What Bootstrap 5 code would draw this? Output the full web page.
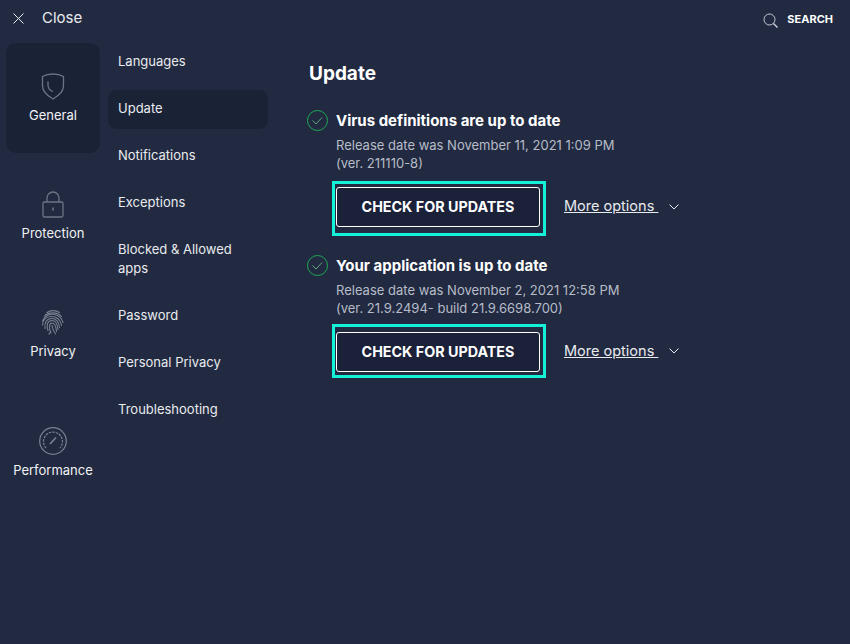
<!DOCTYPE html>
<html lang="en">
<head>
<meta charset="utf-8">
<title>Update</title>
<link href="https://cdn.jsdelivr.net/npm/bootstrap@5.3.0/dist/css/bootstrap.min.css" rel="stylesheet">
<style>
html,body{height:100%;}
body{background:#212a41;color:#fff;font-family:Inter,"Liberation Sans",sans-serif;font-size:13px;overflow:hidden;}
.topbar{height:37px;padding:0 17px 0 13px;}
.close-txt{font-size:15px;color:#e9ebef;margin-left:18px;line-height:20px;padding-bottom:2px;}
.search-txt{font-size:11px;font-weight:700;margin-left:9px;padding-top:2px;}
.search-ico{margin-top:3px;}
.rail{width:94px;margin:6px 0 0 6px;gap:8px;}
.tile{height:110px;border-radius:10px;padding-top:30px;color:#f1f2f5;}
.tile svg{display:block;margin-bottom:6px;}
.tile.on{background:#1a2236;}
.subnav{width:160px;margin:6px 0 0 8px;gap:8px;}
.subitem{padding:9px 10px 11px;line-height:19px;border-radius:9px;color:#e9ebef;}
.subitem.on{background:#1a2236;}
.pane{padding:25px 0 0 41px;}
.pane-title{font-size:19px;font-weight:700;line-height:24px;margin-bottom:24px;}
.st-title{font-size:15px;font-weight:700;line-height:20px;padding-top:1px;}
.st-desc{color:#b7bcc7;line-height:18px;margin:5px 0 0 29px;}
.act{margin:9px 0 0 25px;}
.act.second{margin-top:7px;}
.hl{border:3px solid #14f1d9;padding:3px 3px 6px 1px;}
.second .hl{padding:5px 3px 3px 1px;}
.chk{width:204px;height:40px;background:#1b2138;border:1px solid #fff;border-radius:3px;color:#fff;font-size:14.3px;font-weight:700;padding:0;}
.chk:hover{background:#1b2138;color:#fff;border-color:#fff;}
.more{color:#e9ebef;font-size:14.5px;text-decoration:underline;margin-left:18px;padding-bottom:6px;white-space:pre;}
.second .more{padding-bottom:0;}
.more:hover{color:#e9ebef;}
.chev{margin:0 0 4px 11px;}
.second .chev{margin-bottom:0;}
.group{margin-bottom:19px;}
.status{margin-left:-2px;}
</style>
</head>
<body>
<div class="d-flex flex-column h-100">
  <div class="topbar d-flex align-items-center justify-content-between">
    <div class="d-flex align-items-center">
      <svg width="11" height="11" viewBox="0 0 11 11"><path d="M.5.500l10 10M10.500.500l-10 10" stroke="#e9ebef" stroke-width="1" fill="none"/></svg>
      <span class="close-txt">Close</span>
    </div>
    <div class="d-flex align-items-center">
      <svg class="search-ico" width="15" height="15" viewBox="0 0 15 15" fill="none" stroke="#c9ccd4"><circle cx="6.500" cy="6.500" r="5.500"/><path d="M10.500 10.500l4 4" stroke-width="1.500"/></svg>
      <span class="search-txt">SEARCH</span>
    </div>
  </div>
  <div class="d-flex flex-grow-1">
    <div class="rail d-flex flex-column flex-shrink-0">
      <div class="tile on d-flex flex-column align-items-center">
        <svg width="24" height="27" viewBox="0 0 24 27" fill="none" stroke="#6d7485" stroke-width="1.300"><path d="M1.500 3.500C5 1.500 8 1 12 1s7 .5 10.500 2.500V13c0 5.500-4.500 9.500-10.500 13C6 22.500 1.500 18.500 1.500 13z"/><path d="M7 8.500v3.500c0 3.500 2 5.500 5 6.500"/></svg>
        <span>General</span>
      </div>
      <div class="tile d-flex flex-column align-items-center">
        <svg width="22" height="27" viewBox="0 0 22 27" fill="none" stroke="#6d7485" stroke-width="1.300"><rect x="1" y="11" width="20" height="15" rx="1.500"/><path d="M5 11V7a6 6 0 0 1 12 0v4"/><path d="M11 16.500v3" stroke-width="1.600"/></svg>
        <span>Protection</span>
      </div>
      <div class="tile d-flex flex-column align-items-center">
        <svg width="24" height="27" viewBox="0 0 24 27" fill="none" stroke="#7b8292" stroke-width="1.100" stroke-linecap="round"><path d="M6 3.500C9.500 1 15 1 18.500 3.500"/><path d="M3.500 7C7 3 16.500 2.500 20.500 7.500"/><path d="M1.500 12C3.500 6.500 9 4.500 13.500 5.500s7.500 4.500 8.500 8"/><path d="M1.500 16c0-5 3.500-8.500 8.500-8.500 6 0 9.500 3.500 10.500 9"/><path d="M4 19.500c-1-6 2-10 6.500-10 4.500 0 7.500 3.500 8 9"/><path d="M7 21.500C5 16 6.500 11.500 11 11.500c3.500 0 5.500 3 6 9"/><path d="M9.500 23c-1.500-3-1.500-9 1.500-9s4 3 4.500 8.500"/><path d="M11 16.500c.5 3.500 1.500 6 3.500 8.500"/><path d="M8 25l2-2"/></svg>
        <span>Privacy</span>
      </div>
      <div class="tile d-flex flex-column align-items-center">
        <svg width="28" height="28" viewBox="0 0 28 28" fill="none" stroke="#7b8292" stroke-width="1.200"><circle cx="14" cy="14" r="13.300"/><path d="M7 21a9.500 9.500 0 1 1 14 0" stroke-dasharray="2.500 1"/><path d="M11 17l6-6.500" stroke-width="1.600"/></svg>
        <span>Performance</span>
      </div>
    </div>
    <div class="subnav d-flex flex-column flex-shrink-0">
      <div class="subitem">Languages</div>
      <div class="subitem on">Update</div>
      <div class="subitem">Notifications</div>
      <div class="subitem">Exceptions</div>
      <div class="subitem">Blocked &amp; Allowed apps</div>
      <div class="subitem">Password</div>
      <div class="subitem">Personal Privacy</div>
      <div class="subitem">Troubleshooting</div>
    </div>
    <div class="pane flex-grow-1">
      <div class="pane-title">Update</div>
      <div class="group status">
        <div class="d-flex align-items-center gap-2">
          <svg width="21" height="21" viewBox="0 0 21 21" fill="none"><circle cx="10.500" cy="10.500" r="10" stroke="#1faa55"/><path d="M5.500 10.500l3.500 3.500 6-6.500" stroke="#5fa67f"/></svg>
          <span class="st-title">Virus definitions are up to date</span>
        </div>
        <div class="st-desc">Release date was November 11, 2021 1:09 PM<br>(ver. 211110-8)</div>
        <div class="act d-flex align-items-center">
          <div class="hl"><button type="button" class="btn chk">CHECK FOR UPDATES</button></div>
          <a href="#" class="more">More options </a>
          <svg class="chev" width="10" height="6" viewBox="0 0 10 6" fill="none"><path d="M.5.500l4.500 4.500 4.500-4.500" stroke="#e9ebef"/></svg>
        </div>
      </div>
      <div class="group status">
        <div class="d-flex align-items-center gap-2">
          <svg width="21" height="21" viewBox="0 0 21 21" fill="none"><circle cx="10.500" cy="10.500" r="10" stroke="#1faa55"/><path d="M5.500 10.500l3.500 3.500 6-6.500" stroke="#5fa67f"/></svg>
          <span class="st-title">Your application is up to date</span>
        </div>
        <div class="st-desc">Release date was November 2, 2021 12:58 PM<br>(ver. 21.9.2494- build 21.9.6698.700)</div>
        <div class="act second d-flex align-items-center">
          <div class="hl"><button type="button" class="btn chk">CHECK FOR UPDATES</button></div>
          <a href="#" class="more">More options </a>
          <svg class="chev" width="10" height="6" viewBox="0 0 10 6" fill="none"><path d="M.5.500l4.500 4.500 4.500-4.500" stroke="#e9ebef"/></svg>
        </div>
      </div>
    </div>
  </div>
</div>
</body>
</html>
